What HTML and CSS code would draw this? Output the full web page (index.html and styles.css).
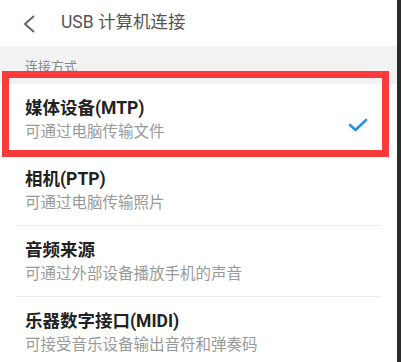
FILE: index.html
```html
<!DOCTYPE html>
<html lang="zh">
<head>
<meta charset="utf-8">
<link rel="stylesheet" href="styles.css">
</head>
<body>
<div class="screen">
  <div class="app">
    <header class="topbar">
      <svg class="back" width="14" height="20" viewBox="0 0 14 20"><path d="M12 2 L3 10 L12 18" fill="none" stroke="#666" stroke-width="2"/></svg>
      <span class="title">USB 计算机连接</span>
    </header>
    <div class="section">连接方式</div>
    <ul class="list">
      <li class="item">
        <div class="texts">
          <div class="name">媒体设备(MTP)</div>
          <div class="desc">可通过电脑传输文件</div>
        </div>
        <svg class="check" width="20" height="16" viewBox="0 0 20 16"><path d="M2 8 L7.5 13 L18 3" fill="none" stroke="#2e8ee8" stroke-width="2.6" stroke-linecap="round" stroke-linejoin="round"/></svg>
      </li>
      <li class="item">
        <div class="texts">
          <div class="name">相机(PTP)</div>
          <div class="desc">可通过电脑传输照片</div>
        </div>
      </li>
      <li class="item">
        <div class="texts">
          <div class="name">音频来源</div>
          <div class="desc">可通过外部设备播放手机的声音</div>
        </div>
      </li>
      <li class="item">
        <div class="texts">
          <div class="name">乐器数字接口(MIDI)</div>
          <div class="desc">可接受音乐设备输出音符和弹奏码</div>
        </div>
      </li>
    </ul>
    <div class="highlight"></div>
  </div>
  <div class="edge"></div>
</div>
</body>
</html>
```
FILE: styles.css
```css
* { box-sizing: border-box; }
html, body { margin: 0; padding: 0; }
body {
  width: 401px;
  height: 362px;
  overflow: hidden;
  font-family: "Roboto", "Noto Sans CJK SC", sans-serif;
  background: #fff;
}
.screen {
  display: flex;
  width: 401px;
  height: 362px;
}
.app {
  position: relative;
  width: 397px;
  height: 362px;
  overflow: hidden;
  background: #fff;
}
.edge {
  flex: 1;
  background: #2b2b2b;
}
.topbar {
  height: 46px;
  display: flex;
  align-items: center;
  padding-left: 22px;
  background: #fff;
}
.back { display: block; margin-top: 1px; }
.title {
  margin-left: 25px;
  font-size: 17.5px;
  color: #555;
  line-height: 1;
}
.section {
  height: 38px;
  background: #f2f2f2;
  padding: 13px 0 0 25px;
  font-size: 13px;
  line-height: 16px;
  color: #888;
}
.list {
  list-style: none;
  margin: 0;
  padding: 0 16px 0 16px;
}
.item {
  height: 71px;
  display: flex;
  align-items: center;
  padding-left: 9px;
  border-bottom: 1px solid #ececec;
}
.texts { flex: 1; padding-top: 1px; }
.name {
  font-size: 17.5px;
  font-weight: bold;
  color: #222;
  line-height: 22px;
}
.desc {
  font-size: 15.5px;
  color: #9a9a9a;
  line-height: 20px;
  margin-top: 3px;
}
.check { margin-right: 13px; margin-top: 12px; }
.highlight {
  position: absolute;
  left: 2px;
  top: 71px;
  width: 387px;
  height: 86px;
  border: 7px solid #fb3a3a;
}
```
